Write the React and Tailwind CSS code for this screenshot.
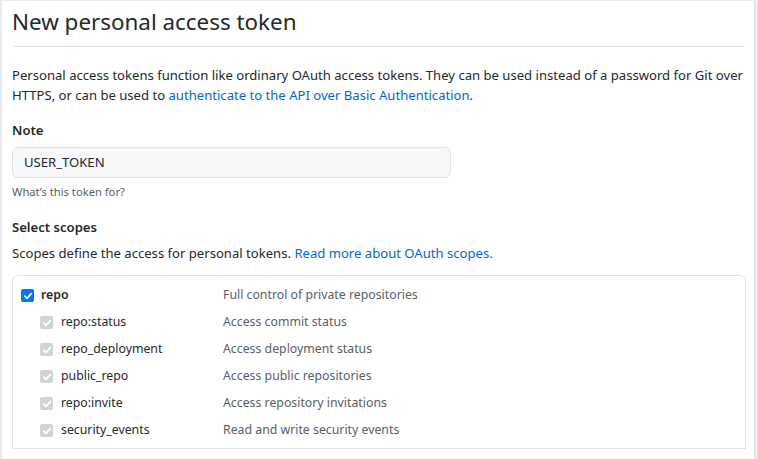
import React from "react";

const Check = ({ disabled }) => (
  <span
    className={
      "flex h-[13px] w-[13px] items-center justify-center rounded-[2px] " +
      (disabled ? "bg-[#d3d3d3]" : "bg-[#0075ff]")
    }
  >
    <svg width="10" height="10" viewBox="0 0 10 10" fill="none">
      <path d="M1.8 5.2 L4 7.3 L8.3 2.6" stroke="white" strokeWidth="1.8" strokeLinecap="round" strokeLinejoin="round" />
    </svg>
  </span>
);

const subs = [
  ["repo:status", "Access commit status"],
  ["repo_deployment", "Access deployment status"],
  ["public_repo", "Access public repositories"],
  ["repo:invite", "Access repository invitations"],
  ["security_events", "Read and write security events"],
];

export default function App() {
  return (
    <div
      className="h-[459px] w-[758px] overflow-hidden bg-[#e8ecf1] pl-[2px] pt-[1px] text-[#24292e]"
      style={{ fontFamily: '"Noto Sans", "Open Sans", sans-serif' }}
    >
      <div className="h-[458px] w-[753px] border-r border-[#d9dde3] bg-white pl-[10px] pr-[9px]">
        <div className="border-b border-[#e1e4e8] pb-[7px] pt-[3px]">
          <h1 className="text-[22.4px] font-normal leading-[35px]">New personal access token</h1>
        </div>
        <p className="mt-[18px] text-[13.1px] leading-[20px]">
          <span className="whitespace-nowrap">Personal access tokens function like ordinary OAuth access tokens. They can be used instead of a password for Git over</span>
          <br />
          HTTPS, or can be used to <span className="text-[#0366d6]">authenticate to the API over Basic Authentication</span>.
        </p>
        <div className="mt-[15px] text-[13.1px] font-semibold leading-[20px]">Note</div>
        <div className="mt-[7px] flex h-[31px] w-[439px] items-center rounded-[6px] border border-[#e1e4e8] bg-[#f6f8fa] px-[11px] text-[13.1px]">
          USER_TOKEN
        </div>
        <div className="mt-[5px] text-[11.2px] leading-[17px] text-[#586069]">What’s this token for?</div>
        <div className="mt-[17px] text-[13.1px] font-semibold leading-[20px]">Select scopes</div>
        <p className="mt-[6px] text-[13.1px] leading-[20px]">
          Scopes define the access for personal tokens.{" "}
          <span className="text-[#0366d6]">Read more about OAuth scopes.</span>
        </p>
        <div className="mt-[12px] w-[734px] rounded-t-[6px] border border-b-0 border-[#e1e4e8]">
          <div className="border-b border-[#e1e4e8] pb-[4px] pt-[6px]">
            <div className="flex h-[27px] items-center text-[12.3px]">
              <div className="flex w-[210px] items-center pl-[8px]">
                <Check />
                <span className="ml-[7px] font-semibold">repo</span>
              </div>
              <span className="text-[#586069]">Full control of private repositories</span>
            </div>
            {subs.map(([n, d]) => (
              <div key={n} className="flex h-[27px] items-center text-[12.3px]">
                <div className="flex w-[210px] items-center pl-[27px]">
                  <Check disabled />
                  <span className="ml-[8px]">{n}</span>
                </div>
                <span className="text-[#586069]">{d}</span>
              </div>
            ))}
          </div>
        </div>
      </div>
    </div>
  );
}
